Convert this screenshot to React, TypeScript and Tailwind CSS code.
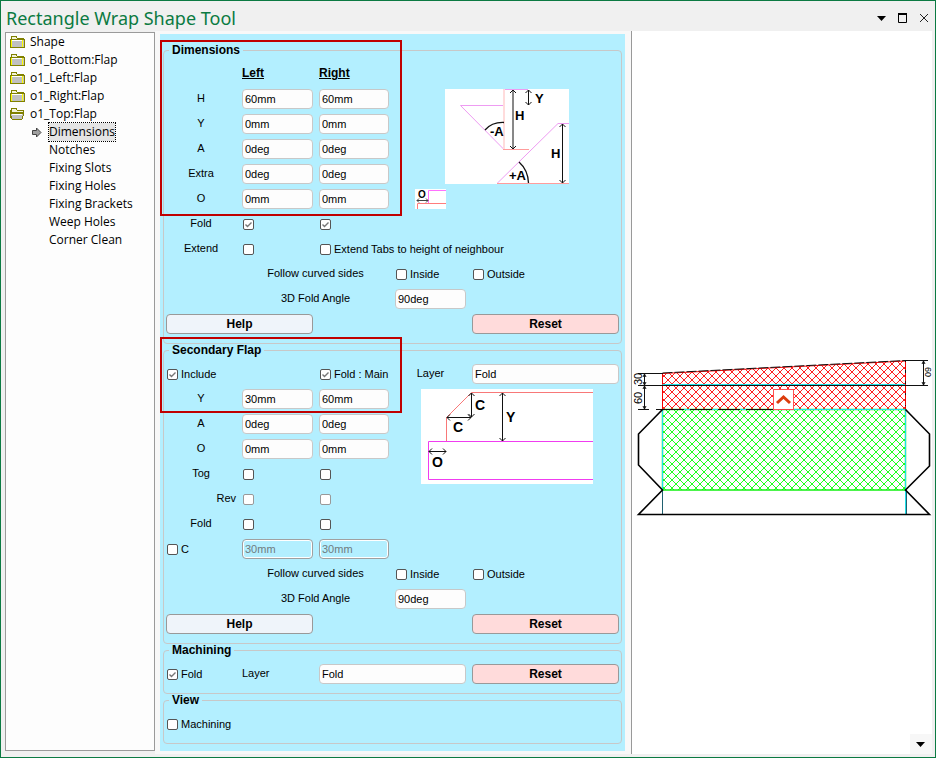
import type { ReactNode } from "react";

const sans = "font-['Liberation_Sans',Arial,sans-serif]";

function Folder({ open = false }: { open?: boolean }) {
  return (
    <svg width="16" height="14" viewBox="0 0 16 14" className="shrink-0" shapeRendering="crispEdges">
      <path d="M2 4V1H7L8 3H14V5H2Z" fill="#f4f4d8" stroke="#808000" />
      {open ? (
        <>
          <path d="M1.5 3V11" stroke="#808000" />
          <path d="M3 12L1 6H15L13 12Z" fill="#c0c0c0" stroke="#808000" />
          <path d="M3 7.5H13" stroke="#fff" />
        </>
      ) : (
        <>
          <path d="M1 4H15V12H1Z" fill="#c0c0c0" stroke="#808000" />
          <path d="M2 12.5H15.5V5" fill="none" stroke="#808000" />
          <path d="M2 5.5H14" stroke="#fff" />
          <path d="M2.5 5V12M13.5 5V12" stroke="#ffff00" />
        </>
      )}
    </svg>
  );
}

const folders = ["Shape", "o1_Bottom:Flap", "o1_Left:Flap", "o1_Right:Flap", "o1_Top:Flap"];
const pages = ["Dimensions", "Notches", "Fixing Slots", "Fixing Holes", "Fixing Brackets", "Weep Holes", "Corner Clean"];

function Tree() {
  return (
    <nav className="mt-px mb-[3px] border border-[#9a9a9a] bg-[#fdfdfd] pl-[3px] font-['Open_Sans',sans-serif] text-[12px] leading-[18px] text-black">
      <ul>
        {folders.map((name) => (
          <li key={name}>
            <a href="#" className="flex items-center gap-[5px]">
              <Folder open={name === "o1_Top:Flap"} />
              <span>{name}</span>
            </a>
          </li>
        ))}
      </ul>
      <ul className="pl-[22px]">
        {pages.map((name, i) => (
          <li key={name}>
            <a href="#" className="flex items-center gap-[6px]">
              <span className="w-3">
                {i === 0 && (
                  <svg width="12" height="11" viewBox="0 0 12 11">
                    <path d="M1.5 3.5H5.5V1L10 5.5L5.5 10V7.5H1.5Z" fill="#a0a0a0" stroke="#444" />
                  </svg>
                )}
              </span>
              <span className={i === 0 ? "bg-[#e4e4e4] outline-1 outline-dotted outline-black" : ""}>{name}</span>
            </a>
          </li>
        ))}
      </ul>
    </nav>
  );
}

function Group({ title, children }: { title: string; children: ReactNode }) {
  return (
    <fieldset className="min-w-0 rounded-[4px] border border-[#c8c8c8] px-[2px] pb-[9px]">
      <legend className="ml-[3px] px-[3px] text-[12px] leading-[13px] font-bold">{title}</legend>
      <div className="relative grid auto-rows-[20px] grid-cols-[70fr_71fr_70fr_71fr_70fr_71fr] gap-x-[6px] gap-y-[5px] pt-[7px]">{children}</div>
    </fieldset>
  );
}

function Caption({ className, children }: { className: string; children: ReactNode }) {
  return <span className={`leading-[18px] whitespace-nowrap ${className}`}>{children}</span>;
}

function Field({ label, value, className, disabled }: { label: string; value: string; className: string; disabled?: boolean }) {
  return (
    <input
      type="text"
      aria-label={label}
      defaultValue={value}
      disabled={disabled}
      className={`h-5 w-full min-w-0 rounded-[4px] border border-[#c8c8c8] bg-[#fdfdfd] px-[2px] text-black disabled:border-[#a0a0a0] disabled:bg-transparent disabled:text-[#707c80] disabled:inset-ring-1 disabled:inset-ring-white ${className}`}
    />
  );
}

function Check({ label, text, className, checked, disabled }: { label: string; text?: string; className: string; checked?: boolean; disabled?: boolean }) {
  return (
    <label className={`flex items-center gap-[3px] pl-px whitespace-nowrap ${className}`}>
      <span className="relative mt-px size-[11px] shrink-0">
        <input
          type="checkbox"
          aria-label={label}
          defaultChecked={checked}
          disabled={disabled}
          className="peer block size-[11px] appearance-none rounded-[2px] border border-[#555] bg-white disabled:border-[#999]"
        />
        <svg viewBox="0 0 11 11" className="pointer-events-none absolute inset-0 hidden size-[11px] peer-checked:block">
          <path d="M2.5 5.5L4.5 7.5L8.5 3.5" fill="none" stroke="#777" strokeWidth="1.4" />
        </svg>
      </span>
      {text}
    </label>
  );
}

function Action({ tone, children, className }: { tone: "help" | "reset"; children: string; className: string }) {
  const bg = tone === "help" ? "bg-[#eff4fa]" : "bg-[#ffdbdb]";
  return (
    <button type="button" className={`h-5 rounded-[4px] border border-[#999] text-[12px] leading-[18px] font-bold ${bg} ${className}`}>
      {children}
    </button>
  );
}

function Pair({ name, left, right = left }: { name: string; left: string; right?: string }) {
  return (
    <>
      <Caption className="col-start-1 text-center">{name}</Caption>
      <Field label={`${name} left`} value={left} className="col-start-2" />
      <Field label={`${name} right`} value={right} className="col-start-3" />
    </>
  );
}

function CheckPair({ name, align = "text-center", checked, disabled }: { name: string; align?: string; checked?: boolean; disabled?: boolean }) {
  return (
    <>
      <Caption className={`col-start-1 ${align}`}>{name}</Caption>
      <Check label={`${name} left`} className="col-start-2" checked={checked} disabled={disabled} />
      <Check label={`${name} right`} className="col-start-3" checked={checked} disabled={disabled} />
    </>
  );
}

function FoldRows() {
  return (
    <>
      <Caption className="col-span-2 col-start-2 text-center">Follow curved sides</Caption>
      <Check label="Inside" text="Inside" className="col-start-4" />
      <Check label="Outside" text="Outside" className="col-start-5" />
      <Caption className="col-span-2 col-start-2 text-center">3D Fold Angle</Caption>
      <Field label="3D Fold Angle" value="90deg" className="col-start-4" />
      <Action tone="help" className="col-span-2 col-start-1">Help</Action>
      <Action tone="reset" className="col-span-2 col-start-5">Reset</Action>
    </>
  );
}

// red marker frame laid over the first three columns
function Highlight({ className }: { className: string }) {
  return <div className={`pointer-events-none absolute -left-[6px] w-[53.5%] border-2 border-[#c00000] ${className}`} />;
}

// double headed dimension arrow
function Arrow({ x1, y1, x2, y2 }: { x1: number; y1: number; x2: number; y2: number }) {
  const a = 3;
  const heads =
    x1 === x2
      ? `M${x1 - a} ${y1 + a}L${x1} ${y1}L${x1 + a} ${y1 + a}M${x2 - a} ${y2 - a}L${x2} ${y2}L${x2 + a} ${y2 - a}`
      : `M${x1 + a} ${y1 - a}L${x1} ${y1}L${x1 + a} ${y1 + a}M${x2 - a} ${y2 - a}L${x2} ${y2}L${x2 - a} ${y2 + a}`;
  return <path d={`M${x1} ${y1}L${x2} ${y2}${heads}`} fill="none" stroke="#111" />;
}

function AngleDiagram() {
  return (
    <svg viewBox="0 0 124 95" className="col-span-3 col-start-4 row-span-4 row-start-2 h-[95px] w-[124px] justify-self-center bg-white" fontSize="13" fontWeight="bold" fontFamily="Liberation Sans">
      <g fill="none">
        <path d="M59 .5H83M59 16.5H15.5L59 60.5M52 94.5L113 34.5H124" stroke="#ee9cf2" />
        <path d="M59 0V60" stroke="#ffdcdc" strokeWidth="2" />
        <path d="M58 60.5H84M52 94.5H124" stroke="#ff9c9c" />
        <path d="M40 41Q47 33 59 33.5M74 73Q83 81 83.5 94" stroke="#111" strokeWidth="1.3" />
      </g>
      <Arrow x1={68} y1={1} x2={68} y2={60} />
      <Arrow x1={83.5} y1={1} x2={83.5} y2={16} />
      <Arrow x1={117.5} y1={35} x2={117.5} y2={94} />
      <text x="90" y="14">Y</text>
      <text x="70" y="31">H</text>
      <text x="106" y="69">H</text>
      <text x="45" y="47">-A</text>
      <text x="64" y="91">+A</text>
    </svg>
  );
}

function OffsetDiagram() {
  return (
    <svg viewBox="0 0 31 20" className="col-start-4 row-start-6 h-5 w-[31px] justify-self-center bg-white" fontSize="10" fontWeight="bold" fontFamily="Liberation Sans">
      <path d="M13.5 14V1.5H31" fill="none" stroke="#ff70ff" />
      <path d="M2.5 20V14.5H31" fill="none" stroke="#ff7c7c" />
      <path d="M2 11.5H13M4 9.5L2 11.5L4 13.5M11 9.5L13 11.5L11 13.5" fill="none" stroke="#444" />
      <text x="3" y="9">O</text>
    </svg>
  );
}

function FlapDiagram() {
  return (
    <svg viewBox="0 0 172 95" className="col-span-3 col-start-4 row-span-4 row-start-2 h-[95px] w-[172px] justify-self-center bg-white" fontSize="14" fontWeight="bold" fontFamily="Liberation Sans">
      <path d="M25.5 52V28.5L50.5 3.5H172" fill="none" stroke="#f87878" />
      <path d="M172 52.5H7.5V90.5H172" fill="none" stroke="#f03cf0" />
      <Arrow x1={50.5} y1={4} x2={50.5} y2={28} />
      <Arrow x1={26} y1={28.5} x2={50} y2={28.5} />
      <Arrow x1={81.5} y1={4} x2={81.5} y2={52} />
      <Arrow x1={8} y1={62.5} x2={25} y2={62.5} />
      <text x="54" y="21">C</text>
      <text x="32" y="43">C</text>
      <text x="85" y="33">Y</text>
      <text x="11" y="78">O</text>
    </svg>
  );
}

function Preview() {
  return (
    <svg viewBox="632 355 300 170" className="mt-[324px] w-full" fontSize="11" fontFamily="Liberation Sans" role="img" aria-label="Shape preview">
      <defs>
        <pattern id="redHatch" width="8" height="8" patternUnits="userSpaceOnUse">
          <path d="M0 0L8 8M8 0L0 8" stroke="#ff2020" />
        </pattern>
        <pattern id="greenHatch" width="8" height="8" patternUnits="userSpaceOnUse">
          <path d="M0 0L8 8M8 0L0 8" stroke="#20ff20" />
        </pattern>
      </defs>
      <path d="M662.5 373.5L905.5 361V409.5H662.5Z" fill="url(#redHatch)" stroke="#ff0000" />
      <rect x="662.5" y="409.5" width="243" height="80.5" fill="url(#greenHatch)" stroke="#00f000" strokeWidth="1.4" />
      <path d="M662.5 384.5H905.5M662.5 409.5H905.5M662.5 410V514M905.5 410V514" fill="none" stroke="#20e0e8" />
      <path d="M662.5 490V514M906.5 490V514" stroke="#206070" />
      <path d="M662.5 373L905.5 360.5V409" fill="none" stroke="#111" strokeDasharray="10 2" />
      <path d="M662.5 374V409M905.5 362V409" stroke="#f00000" strokeDasharray="8 3" />
      <path d="M638 373.5H663M638 385.5H928M638 409.5H649M656 409.5H684M690 409.5H712M718 409.5H740M746 409.5H773M905 360.5H928" fill="none" stroke="#111" />
      <path d="M662.5 409.5L638.5 434V465L662.5 490L638.5 514.5H929.5L905.5 490L929.5 466V434L905.5 409.5" fill="none" stroke="#000" strokeWidth="1.6" />
      <g fill="none" stroke="#111">
        <path d="M644.5 374V409M643 377L644.5 374L646 377M643 382L644.5 385L646 382M643 389L644.5 386L646 389M643 406L644.5 409L646 406" />
        <path d="M923.5 361V385M922 364L923.5 361L925 364M922 382L923.5 385L925 382" />
      </g>
      <text transform="translate(642 385) rotate(-90)">30</text>
      <text transform="translate(642 404) rotate(-90)">60</text>
      <text transform="translate(925 367) rotate(90)" fontSize="9">60</text>
      <rect x="773.5" y="389.5" width="20" height="20" fill="#fff" stroke="#ff5050" />
      <path d="M777 403L783.5 397L790 403" fill="none" stroke="#dc3c0c" strokeWidth="3" />
    </svg>
  );
}

export default function App() {
  return (
    <div className={`flex min-h-screen w-full flex-col border border-[#0b7a42] bg-[#f0f0f0] pr-[3px] pb-[3px] pl-1 text-[11px] text-black ${sans}`}>
      <header className="flex h-[30px] items-center justify-between pt-[4px] pr-[3px]">
        <h1 className="pl-px font-['Noto_Sans',sans-serif] text-[18px] leading-[26px] text-[#0b7a42]">Rectangle Wrap Shape Tool</h1>
        <div className="flex items-center gap-[11px]">
          <button type="button" aria-label="Window menu">
            <svg width="10" height="10" viewBox="0 0 10 10"><path d="M0 3H9L4.5 8Z" /></svg>
          </button>
          <button type="button" aria-label="Maximise">
            <svg width="10" height="10" viewBox="0 0 10 10" fill="none" stroke="#000"><path d="M.5 1V9.5H8.5V1" /><path d="M0 1H9" strokeWidth="2" /></svg>
          </button>
          <button type="button" aria-label="Close">
            <svg width="10" height="10" viewBox="0 0 10 10" stroke="#222"><path d="M1 1L9 9M9 1L1 9" /></svg>
          </button>
        </div>
      </header>

      <div className="grid flex-1 grid-cols-[150px_476fr_301fr]">
        <Tree />

        <main className="bg-[#f8f8f8] pt-[3px] pr-[6px] pb-[3px] pl-[5px]">
          <form className="h-full bg-[#b3efff] px-[3px] pt-[10px] pb-[7px]">
            <Group title="Dimensions">
              <AngleDiagram />
              <OffsetDiagram />
              <Caption className="col-start-2 text-[12px] font-bold underline">Left</Caption>
              <Caption className="col-start-3 text-[12px] font-bold underline">Right</Caption>
              <Pair name="H" left="60mm" />
              <Pair name="Y" left="0mm" />
              <Pair name="A" left="0deg" />
              <Pair name="Extra" left="0deg" />
              <Pair name="O" left="0mm" />
              <CheckPair name="Fold" checked />
              <Caption className="col-start-1 text-center">Extend</Caption>
              <Check label="Extend left" className="col-start-2" />
              <Check label="Extend Tabs to height of neighbour" text="Extend Tabs to height of neighbour" className="col-span-3 col-start-3" />
              <FoldRows />
              <Highlight className="-top-[17px] h-[176px]" />
            </Group>

            <Group title="Secondary Flap">
              <FlapDiagram />
              <Check label="Include" text="Include" className="col-start-1" checked />
              <Check label="Fold : Main" text="Fold : Main" className="col-start-3" checked />
              <Caption className="col-start-4 text-center">Layer</Caption>
              <Field label="Layer" value="Fold" className="col-span-2 col-start-5" />
              <Pair name="Y" left="30mm" right="60mm" />
              <Pair name="A" left="0deg" />
              <Pair name="O" left="0mm" />
              <CheckPair name="Tog" />
              <CheckPair name="Rev" align="text-right" disabled />
              <CheckPair name="Fold" />
              <Check label="C" text="C" className="col-start-1" />
              <Field label="C left" value="30mm" className="col-start-2" disabled />
              <Field label="C right" value="30mm" className="col-start-3" disabled />
              <FoldRows />
              <Highlight className="-top-[20px] h-[76px]" />
            </Group>

            <Group title="Machining">
              <Check label="Fold" text="Fold" className="col-start-1" checked />
              <Caption className="col-start-2">Layer</Caption>
              <Field label="Machining layer" value="Fold" className="col-span-2 col-start-3" />
              <Action tone="reset" className="col-span-2 col-start-5">Reset</Action>
            </Group>

            <Group title="View">
              <Check label="Machining" text="Machining" className="col-span-2 col-start-1" />
            </Group>
          </form>
        </main>

        <section className="flex flex-col border-l border-[#999] bg-white">
          <Preview />
          <button type="button" aria-label="Scroll down" className="mt-auto flex h-5 w-[22px] items-center justify-center self-end bg-[#f7f7f7]">
            <svg width="10" height="6" viewBox="0 0 10 6"><path d="M0 1H9L4.5 6Z" /></svg>
          </button>
        </section>
      </div>
    </div>
  );
}
